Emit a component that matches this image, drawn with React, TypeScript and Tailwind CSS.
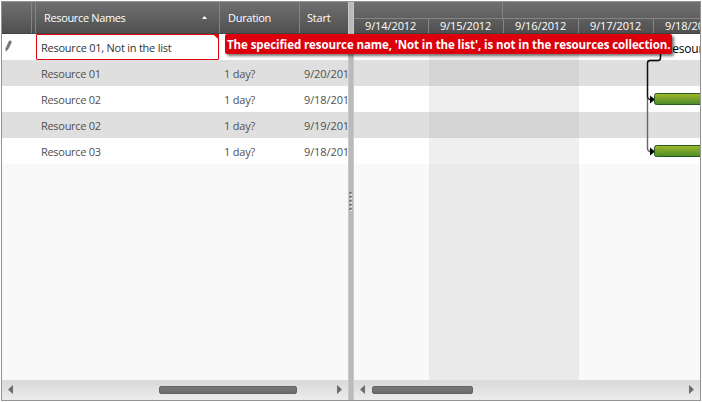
import React from "react";

const tasks = [
  { name: "Resource 01", duration: "1 day?", start: "9/20/2012", alt: true },
  { name: "Resource 02", duration: "1 day?", start: "9/18/2012", alt: false },
  { name: "Resource 02", duration: "1 day?", start: "9/19/2012", alt: true },
  { name: "Resource 03", duration: "1 day?", start: "9/18/2012", alt: false },
];

const days = ["9/14/2012", "9/15/2012", "9/16/2012", "9/17/2012"];

function Divider() {
  return <div className="h-full w-px shrink-0 bg-[#858585]" />;
}

function ScrollBar({ thumb }: { thumb: string }) {
  return (
    <div className="flex h-5 shrink-0 items-center border-t border-[#dedede] bg-linear-to-b from-[#d9d9d9] to-[#ececec] px-1.5 pb-[2px]">
      <svg width="5" height="9" className="shrink-0">
        <path d="M5 0v9L0 4.500z" fill="#6b6b6b" />
      </svg>
      <div className="flex flex-1">
        <div className={"h-2 rounded-[2px] border border-[#646464] bg-linear-to-b from-[#777] to-[#6b6b6b] " + thumb} />
      </div>
      <svg width="5" height="9" className="shrink-0">
        <path d="M0 0v9l5-4.500z" fill="#6b6b6b" />
      </svg>
    </div>
  );
}

function GridPane() {
  return (
    <section className="flex w-[346px] shrink-0 flex-col overflow-hidden">
      <header className="flex h-8 shrink-0 items-center border-b border-[#444] bg-linear-to-b from-[#707070] to-[#505050] text-white">
        <div className="w-[29px] shrink-0" />
        <Divider />
        <div className="w-[3px] shrink-0" />
        <Divider />
        <div className="flex w-[183px] shrink-0 items-center justify-between pr-[12px] pl-[8px]">
          <span className="tracking-[-0.35px]">Resource Names</span>
          <svg width="5" height="3"><path d="M0 3L2.5 0 5 3z" fill="#fff" /></svg>
        </div>
        <Divider />
        <div className="w-[79px] shrink-0 pl-[8px] tracking-[-0.3px]">Duration</div>
        <Divider />
        <div className="pl-[7px] tracking-[-0.2px]">Start</div>
      </header>
      <div className="flex h-[26px] shrink-0 bg-white">
        <div className="flex w-[34px] shrink-0 items-start pt-[6px] pl-[3px]">
          <svg width="7" height="12" viewBox="0 0 8 13">
            <path d="M4.500 1.200L6 .5l1.200.6-.3 2.200L3.600 10 1 12.400 1 9z" fill="#6f6f6f" stroke="#777" strokeWidth=".6" />
            <path d="M4.700 3L2 8.700" stroke="#999" strokeWidth=".5" />
          </svg>
        </div>
        <div className="relative flex h-[26px] w-[183px] shrink-0 items-center rounded-[1px] border border-[#dc000c] pt-px pl-1 text-[#333]">
          <span className="tracking-[-0.24px]">Resource 01, Not in the list</span>
          <svg width="6" height="6" className="absolute -top-px -right-px">
            <path d="M0 0h6v6z" fill="#dc000c" />
          </svg>
        </div>
      </div>
      {tasks.map((t, i) => (
        <div key={i} className={"flex h-[26px] shrink-0 items-center pt-[2px] whitespace-nowrap text-[#505050] " + (t.alt ? "bg-[#dfdfdf]" : "bg-white")}>
          <div className="w-[222px] shrink-0 pl-[39px] tracking-[-0.3px]">{t.name}</div>
          <div className="w-[80px] shrink-0 tracking-[-0.2px]">{t.duration}</div>
          <div className="tracking-[-0.1px]">{t.start}</div>
        </div>
      ))}
      <div className="flex-1 bg-[#f9f9f9]" />
      <ScrollBar thumb="ml-[146px] w-[138px]" />
    </section>
  );
}

function Splitter() {
  return (
    <div className="flex w-[6px] shrink-0 flex-col items-center justify-center gap-px border-x border-[#c9c9c9] bg-[#bababa]">
      {[0, 1, 2, 3, 4].map((n) => (
        <svg key={n} width="4" height="3">
          <path d="M1 1h2v2H1z" fill="#f2f2f2" />
          <path d="M0 1h3M1.500 0v2" stroke="#666" strokeWidth="1" />
        </svg>
      ))}
    </div>
  );
}

function ChartPane() {
  return (
    <section className="flex w-[346px] shrink-0 flex-col overflow-hidden">
      <header className="flex h-8 shrink-0 flex-col border-b border-[#444] bg-linear-to-b from-[#707070] to-[#505050] text-white">
        <div className="flex h-[17px] shrink-0 border-b border-[#858585]">
          <div className="w-[148px]" />
          <Divider />
        </div>
        <div className="flex h-[14px] items-center whitespace-nowrap">
          {days.map((d) => (
            <React.Fragment key={d}>
              <div className="w-[74px] shrink-0 pl-[11px] tracking-[-0.1px]">{d}</div>
              <Divider />
            </React.Fragment>
          ))}
          <div className="pl-[11px] tracking-[-0.1px]">9/18/2012</div>
        </div>
      </header>
      <div className="relative flex-1 bg-[#f9f9f9]">
        <div className="flex h-[26px] items-center justify-end overflow-hidden bg-white pt-[3px]">
          <span className="w-[35px] text-[12px] whitespace-nowrap tracking-[-0.2px] text-black">Resource 01</span>
        </div>
        {tasks.map((t, i) => (
          <div key={i} className={"h-[26px] " + (t.alt ? "bg-[#dfdfdf]" : "bg-white")} />
        ))}
        <div className="absolute inset-y-0 left-[75px] w-[150px] bg-[#999]/[0.155]" />
        <svg width="346" height="346" className="absolute top-0 left-0">
          <defs>
            <linearGradient id="task" x2="0" y2="1">
              <stop stopColor="#a2b92b" />
              <stop offset="1" stopColor="#4a8b2b" />
            </linearGradient>
          </defs>
          <path d="M306.500 18V24Q306.500 26.500 304 26.500H296Q293.500 26.500 293.500 29V114Q293.500 117.500 297 117.500" fill="none" stroke="#666" strokeWidth="1.400" />
          <path d="M306.500 18V24Q306.500 26.500 304 26.500H296Q293.500 26.500 293.500 29V62Q293.500 65.500 297 65.500" fill="none" stroke="#111" strokeWidth="1.300" />
          <path d="M296 61.500L301 65.500 296 69.500zM296 113.500L301 117.500 296 121.500z" fill="#000" />
          <rect x="300.500" y="59.500" width="60" height="11" rx="2" fill="url(#task)" stroke="#28591f" />
          <rect x="300.500" y="111.500" width="60" height="11" rx="2" fill="url(#task)" stroke="#28591f" />
        </svg>
      </div>
      <ScrollBar thumb="ml-[7px] w-[101px]" />
    </section>
  );
}

export default function App() {
  return (
    <main className="relative h-[402px] w-[702px] overflow-hidden bg-white p-px font-['Open_Sans','Noto_Sans',sans-serif] text-[11px] leading-[14px]">
      <div className="flex h-[400px] w-[700px] overflow-hidden border border-[#929292]">
        <GridPane />
        <Splitter />
        <ChartPane />
      </div>
      <div className="absolute top-[34px] left-[225px] flex h-5 w-[447px] items-center rounded-[2px] bg-[#dc000c] pt-[2px] pl-[2px] font-bold whitespace-nowrap text-white shadow-[2px_2px_3px_rgba(0,0,0,0.55)]">
        <span className="text-[11.500px] tracking-[-0.09px]">The specified resource name, 'Not in the list', is not in the resources collection.</span>
      </div>
    </main>
  );
}
